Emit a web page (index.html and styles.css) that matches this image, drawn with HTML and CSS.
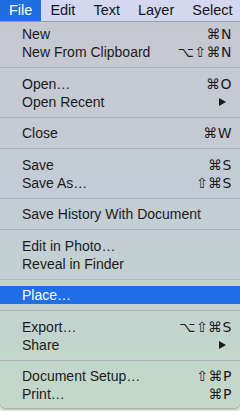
FILE: index.html
```html
<!DOCTYPE html>
<html lang="en">
<head>
    <meta charset="UTF-8">
    <meta name="viewport" content="width=device-width, initial-scale=1.0">
    <title>File menu</title>
    <link rel="stylesheet" href="styles.css">
</head>
<body>
    <div class="menubar">
        <span class="mb-item active">File</span>
        <span class="mb-item">Edit</span>
        <span class="mb-item">Text</span>
        <span class="mb-item">Layer</span>
        <span class="mb-item">Select</span>
    </div>
    <ul class="menu">
        <li class="item"><span>New</span><span class="key">⌘N</span></li>
        <li class="item"><span>New From Clipboard</span><span class="key">⌥⇧⌘N</span></li>
        <li class="sep"></li>
        <li class="item"><span>Open…</span><span class="key">⌘O</span></li>
        <li class="item"><span>Open Recent</span><span class="arrow"></span></li>
        <li class="sep"></li>
        <li class="item"><span>Close</span><span class="key">⌘W</span></li>
        <li class="sep"></li>
        <li class="item"><span>Save</span><span class="key">⌘S</span></li>
        <li class="item"><span>Save As…</span><span class="key">⇧⌘S</span></li>
        <li class="sep"></li>
        <li class="item"><span>Save History With Document</span></li>
        <li class="sep"></li>
        <li class="item"><span>Edit in Photo…</span></li>
        <li class="item"><span>Reveal in Finder</span></li>
        <li class="sep"></li>
        <li class="item selected"><span>Place…</span></li>
        <li class="sep"></li>
        <li class="item"><span>Export…</span><span class="key">⌥⇧⌘S</span></li>
        <li class="item"><span>Share</span><span class="arrow"></span></li>
        <li class="sep"></li>
        <li class="item"><span>Document Setup…</span><span class="key">⇧⌘P</span></li>
        <li class="item"><span>Print…</span><span class="key">⌘P</span></li>
    </ul>
</body>
</html>
```

FILE: styles.css
```css
body { margin: 0; background: #dfe6dc; font-family: "Liberation Sans", Arial, sans-serif; width: 240px; height: 411px; overflow: hidden; }
.menubar { display: flex; height: 21px; background: #d4d7f0; border-bottom: 1px solid #9c9eaa; font-size: 14.5px; color: #141414; }
.mb-item { padding: 0 9px; line-height: 21px; white-space: nowrap; }
.mb-item.active { background: #1f6ee0; color: #fff; }
.menu { list-style: none; margin: 0; padding: 3px 0 5px; background: linear-gradient(#c6c8d1, #c3ccd6 45%, #c3d8c9); border-radius: 0 0 6px 6px; box-shadow: 0 1px 2px rgba(0,0,0,0.35); font-size: 14px; color: #1b1b1b; }
.item { display: flex; justify-content: space-between; align-items: center; height: 18px; padding: 0 8px 0 22px; white-space: nowrap; }
.item.selected { background: #1f6ee6; color: #fff; }
.key { font-family: "DejaVu Sans", sans-serif; font-size: 14px; letter-spacing: 0.5px; }
.arrow { width: 0; height: 0; border-top: 4px solid transparent; border-bottom: 4px solid transparent; border-left: 7px solid #1b1b1b; margin-right: 6px; }
.sep { height: 1px; background: #aeb2ba; margin: 6px 0 6.5px; }
```
